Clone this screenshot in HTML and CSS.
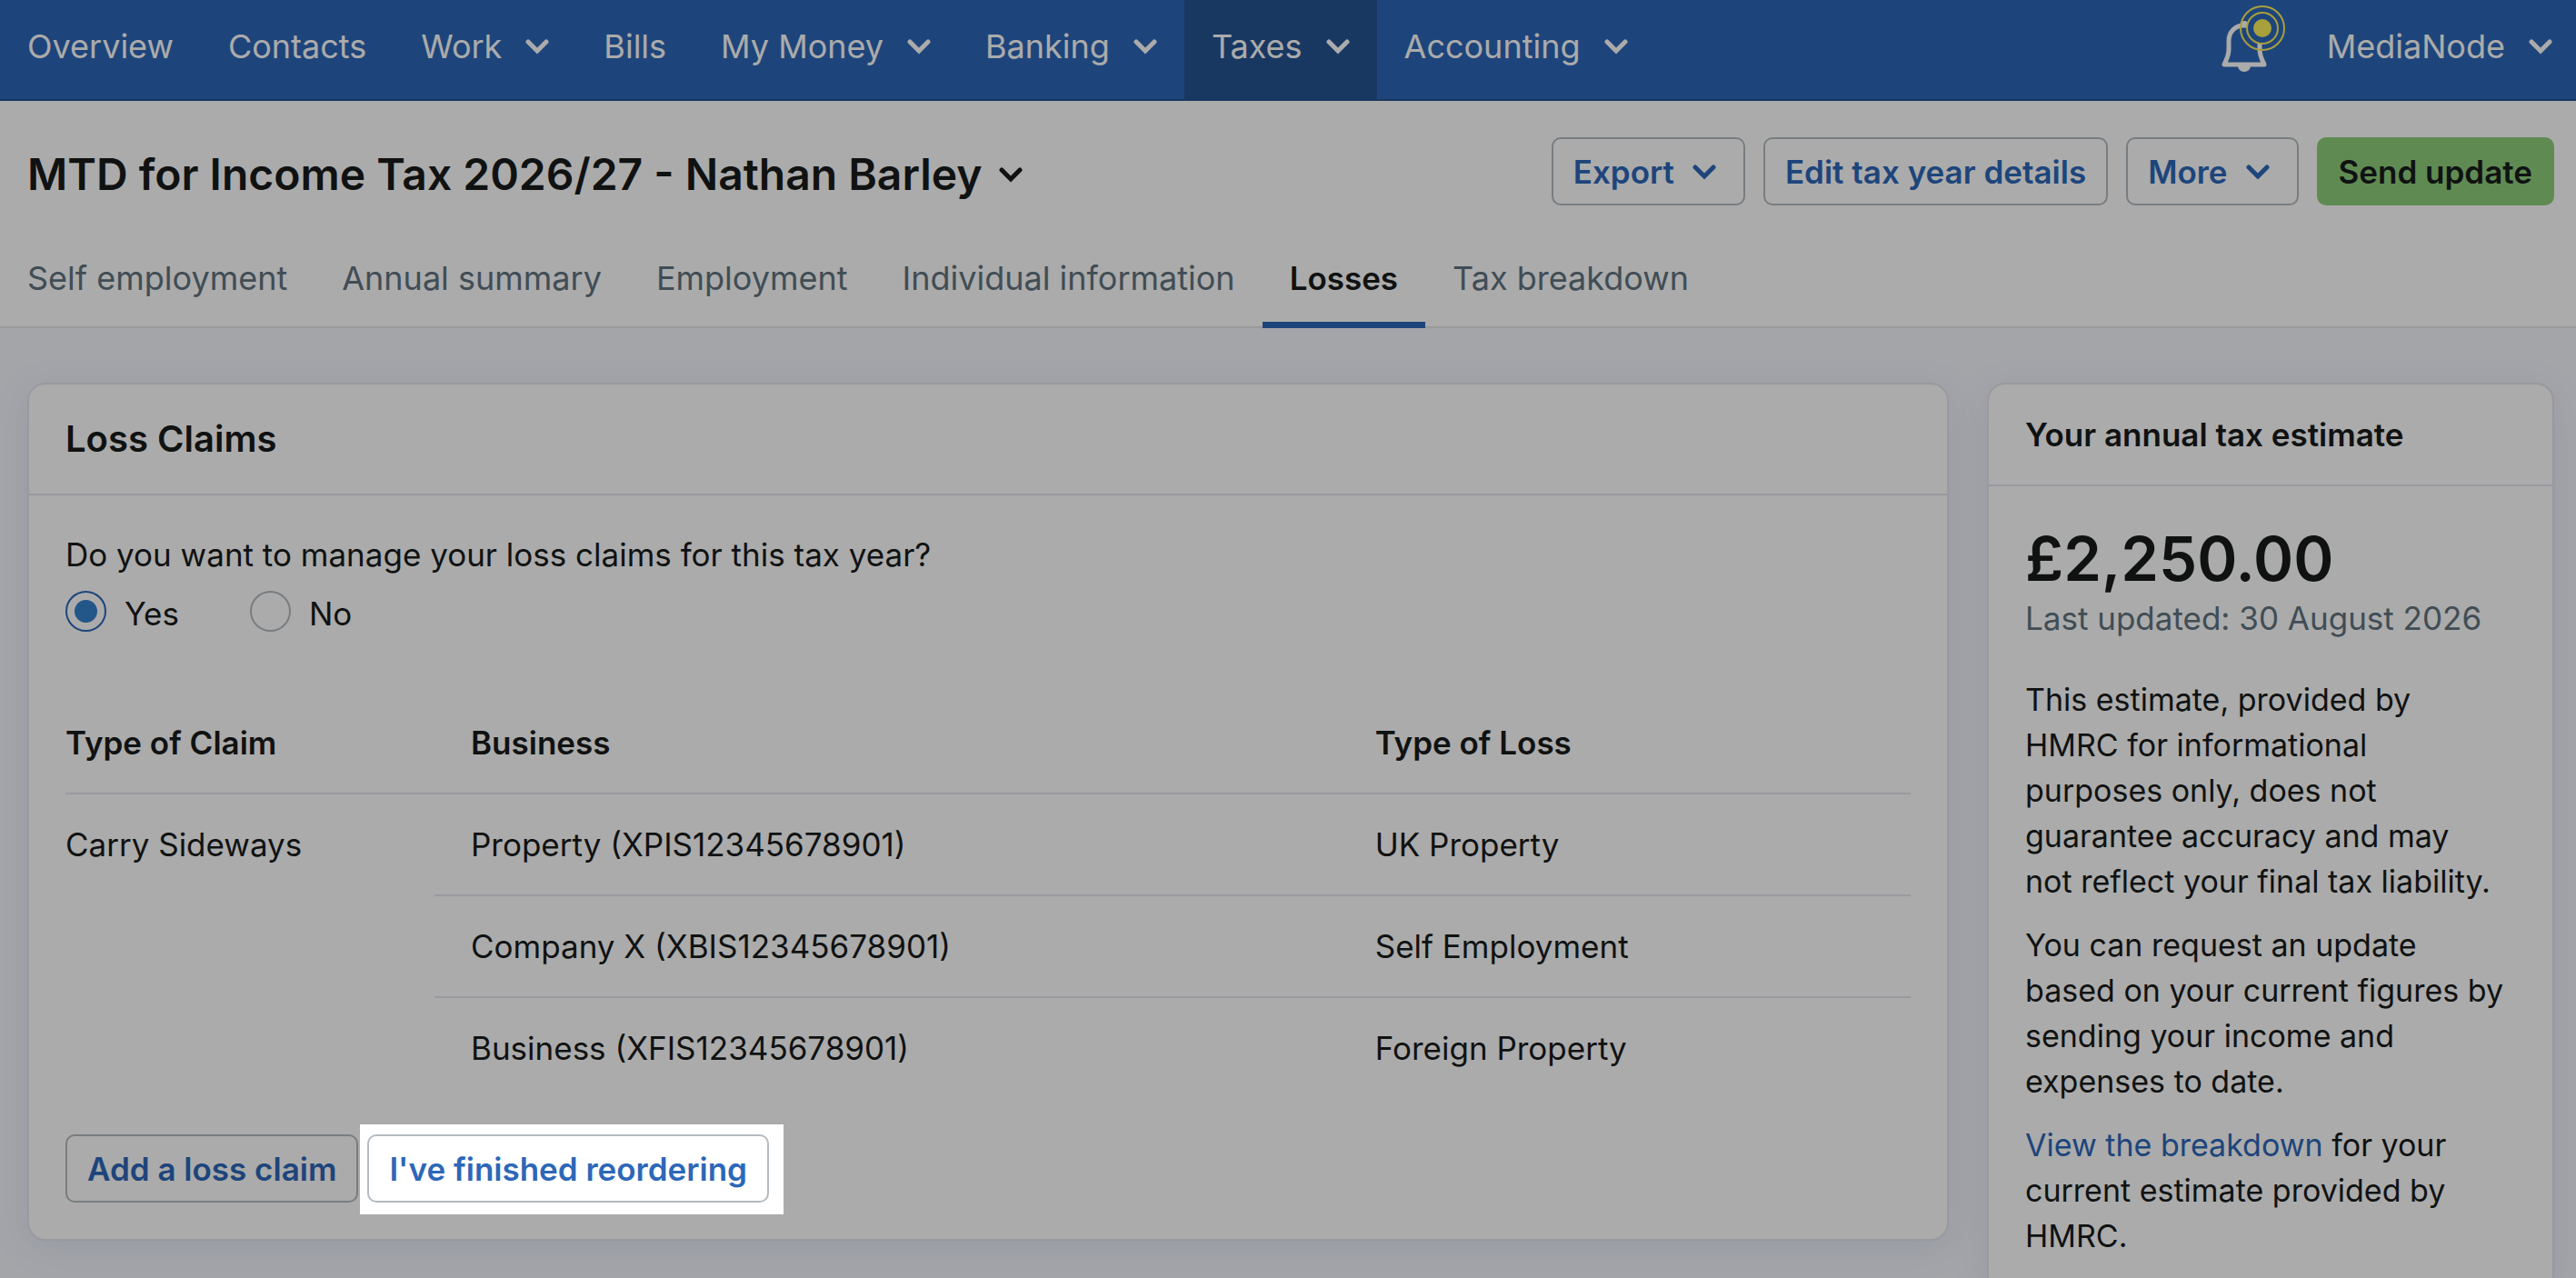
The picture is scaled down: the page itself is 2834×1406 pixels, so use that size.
FILE: index.html
```html
<!DOCTYPE html>
<html lang="en">
<head>
    <meta charset="UTF-8">
    <meta name="viewport" content="width=device-width, initial-scale=1.0">
    <title>MTD for Income Tax 2026/27 - Losses</title>
    <link rel="stylesheet" href="styles.css">
</head>
<body>
    <svg width="0" height="0" class="sprite" aria-hidden="true">
        <symbol id="chevron" viewBox="0 0 26 18">
            <path d="M3 4 L13 14 L23 4" fill="none" stroke="currentColor" stroke-width="5" stroke-linecap="round" stroke-linejoin="miter"/>
        </symbol>
    </svg>

    <nav class="navbar">
        <a href="#">Overview</a>
        <a href="#">Contacts</a>
        <a href="#">Work <svg class="chevron"><use href="#chevron"/></svg></a>
        <a href="#">Bills</a>
        <a href="#">My Money <svg class="chevron"><use href="#chevron"/></svg></a>
        <a href="#">Banking <svg class="chevron"><use href="#chevron"/></svg></a>
        <a href="#" class="active">Taxes <svg class="chevron"><use href="#chevron"/></svg></a>
        <a href="#">Accounting <svg class="chevron"><use href="#chevron"/></svg></a>
        <button type="button" class="bell" aria-label="Notifications">
            <svg viewBox="22 5 72 75" width="72" height="75">
                <path d="M48 28 C38 28 31 35 31 45 V54 C31 62 28 66 26 71 H70 C68 66 65 62 65 54 V45 C65 35 58 28 48 28 Z" fill="none" stroke="#fff" stroke-width="5" stroke-linejoin="round"/>
                <path d="M44 26 Q44 23 48 23 Q52 23 52 26 Z" fill="#fff"/>
                <path d="M41 73 A7 6 0 0 0 55 73 Z" fill="#fff"/>
                <circle cx="68" cy="31" r="17" fill="#2d67b8" stroke="#fbed5c" stroke-width="2"/>
                <circle cx="68" cy="31" r="24" fill="none" stroke="#fbed5c" stroke-width="2"/>
                <circle cx="68" cy="31" r="10" fill="#fbed5c"/>
            </svg>
        </button>
        <a href="#" class="account">MediaNode <svg class="chevron"><use href="#chevron"/></svg></a>
    </nav>

    <header class="page-header">
        <div class="title-row">
            <h1>MTD for Income Tax 2026/27 - Nathan Barley <svg class="chevron"><use href="#chevron"/></svg></h1>
            <div class="actions">
                <button type="button" class="btn btn-menu">Export <svg class="chevron"><use href="#chevron"/></svg></button>
                <button type="button" class="btn">Edit tax year details</button>
                <button type="button" class="btn btn-menu">More <svg class="chevron"><use href="#chevron"/></svg></button>
                <button type="button" class="btn btn-primary">Send update</button>
            </div>
        </div>
        <div class="tabs">
            <a href="#">Self employment</a>
            <a href="#">Annual summary</a>
            <a href="#">Employment</a>
            <a href="#">Individual information</a>
            <a href="#" class="active">Losses</a>
            <a href="#">Tax breakdown</a>
        </div>
    </header>

    <main class="content">
        <section class="card">
            <h2>Loss Claims</h2>
            <div class="card-body">
                <fieldset>
                    <legend>Do you want to manage your loss claims for this tax year?</legend>
                    <div class="radios">
                        <label for="manage_yes"><input type="radio" name="manage" id="manage_yes" checked> Yes</label>
                        <label for="manage_no"><input type="radio" name="manage" id="manage_no"> No</label>
                    </div>
                </fieldset>

                <table>
                    <thead>
                        <tr>
                            <th class="col-claim">Type of Claim</th>
                            <th class="col-business">Business</th>
                            <th>Type of Loss</th>
                        </tr>
                    </thead>
                    <tbody>
                        <tr>
                            <td rowspan="3">Carry Sideways</td>
                            <td>Property (XPIS12345678901)</td>
                            <td>UK Property</td>
                        </tr>
                        <tr>
                            <td>Company X (XBIS12345678901)</td>
                            <td>Self Employment</td>
                        </tr>
                        <tr>
                            <td>Business (XFIS12345678901)</td>
                            <td>Foreign Property</td>
                        </tr>
                    </tbody>
                </table>

                <div class="card-actions">
                    <button type="button" class="btn">Add a loss claim</button>
                    <div class="spotlight">
                        <button type="button" class="btn">I've finished reordering</button>
                    </div>
                </div>
            </div>
        </section>

        <aside class="card estimate">
            <h2>Your annual tax estimate</h2>
            <div class="card-body">
                <div class="amount">£2,250.00</div>
                <div class="updated">Last updated: 30 August 2026</div>
                <p>This estimate, provided by HMRC for informational purposes only, does not guarantee accuracy and may not&nbsp;reflect your final tax liability.</p>
                <p>You can request an update based on your current figures by sending your income and expenses to date.</p>
                <p><a href="#">View the breakdown</a> for your current estimate provided by HMRC.</p>
            </div>
        </aside>
    </main>
</body>
</html>
```
FILE: styles.css
```css
* { box-sizing: border-box; }
body { margin: 0; min-height: 100vh; background: #f5f6fd; color: #181b1c; font: 35px/50px Inter, sans-serif; }
h1, h2, p { margin: 0; }
a { color: #2d67b8; text-decoration: none; }
.sprite { position: absolute; }
.chevron { width: 26px; height: 18px; flex: none; }

/* Top navigation */
.navbar { display: flex; background: #2d67b8; border-bottom: 2px solid #235390; font-size: 36px; }
.navbar a { display: flex; align-items: center; gap: 26px; padding: 26px 30px 33px; color: #fff; white-space: nowrap; }
.navbar a.active { background: #245492; }
.navbar .bell { margin-left: auto; padding: 5px 0 0; border: 0; background: none; }
.bell svg { display: block; margin-bottom: 29px; }
.navbar .account { padding-left: 45px; padding-right: 26px; }

/* Page header */
.page-header { background: #fff; border-bottom: 2px solid #e4e5e6; padding-top: 40px; }
.title-row { display: flex; justify-content: space-between; align-items: center; padding: 0 24px 0 30px; margin-bottom: 30px; }
h1 { display: flex; align-items: center; gap: 18px; padding-top: 6px; font-size: 48px; font-weight: 600; }
.actions { display: flex; gap: 20px; }
.tabs { display: flex; margin-bottom: -2px; font-size: 36px; }
.tabs a { padding: 25px 30px 23px; border-bottom: 7px solid transparent; color: #61737f; white-space: nowrap; }
.tabs a.active { border-bottom-color: #2d67b8; color: #181b1c; font-weight: 600; font-size: 35px; }

/* Buttons */
.btn { display: flex; align-items: center; height: 75px; padding: 0 22px; border: 2px solid #b4bbc1; border-radius: 10px; background: #fff; color: #2d67b8; font: 600 35px/50px Inter, sans-serif; white-space: nowrap; }
.btn-menu { gap: 20px; padding-right: 30px; }
.btn-primary { background: #8ecf7c; border-color: #8ecf7c; color: #181b1c; }

/* Cards */
.content { display: grid; grid-template-columns: minmax(0, 1fr) 624px; align-items: start; gap: 42px; padding: 60px 24px 40px 30px; }
.card { background: #fff; border: 2px solid #e4e5ed; border-radius: 20px; box-shadow: 0 8px 40px rgba(40, 100, 160, 0.1); }
.card h2 { padding: 35px 40px; border-bottom: 2px solid #e4e5ed; font-size: 40px; font-weight: 600; }
.card-body { padding: 40px; }

fieldset { margin: 0 0 62px; padding: 0; border: 0; }
legend { padding: 0; margin-bottom: 15px; }
.radios { display: flex; gap: 78px; }
.radios label { display: flex; gap: 20px; }
input[type="radio"] { appearance: none; width: 45px; height: 45px; margin: 0; border: 2px solid #b4bbc1; border-radius: 50%; }
input[type="radio"]:checked { border-color: #2d67b8; background: radial-gradient(circle, #3580cd 12px, transparent 13px); }

table { width: 100%; border-spacing: 0; table-layout: fixed; text-align: left; }
th, td { padding: 30px 40px; vertical-align: top; }
th { font-weight: 600; }
td { border-top: 2px solid #e4e5ed; }
th:first-child, td[rowspan] { padding-left: 0; }
.col-claim { width: 20%; }
.col-business { width: 49%; }

.card-actions { display: flex; gap: 10px; padding-top: 40px; }

/* Dims the whole page except the highlighted button */
.spotlight { position: relative; z-index: 1; }
.spotlight::before { content: ""; position: absolute; z-index: -1; inset: -11px -16px -13px -8px; background: #fff; box-shadow: 0 0 0 9999px rgba(0, 0, 0, 0.33); }

/* Tax estimate */
.estimate h2 { padding: 30px 40px; font-size: 35px; }
.amount { font-size: 67px; line-height: 80px; font-weight: 600; }
.updated { margin-bottom: 40px; color: #61737f; }
.estimate p { margin-bottom: 20px; padding-right: 10px; font-size: 34px; }
.estimate p:last-child { margin-bottom: 0; }
```
